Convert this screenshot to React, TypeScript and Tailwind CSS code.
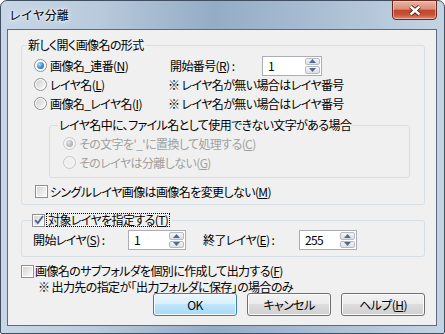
import React from 'react';

const font = "font-['Noto_Sans_CJK_JP',sans-serif] [font-feature-settings:'palt'] tracking-[-0.6px]";

function Radio({ checked, disabled }: { checked?: boolean; disabled?: boolean }) {
  return (
    <span
      className={
        disabled
          ? 'flex h-[13px] w-[13px] shrink-0 items-center justify-center rounded-full border border-[#c8c8c8] bg-[#f4f4f4]'
          : 'flex h-[13px] w-[13px] shrink-0 items-center justify-center rounded-full border border-[#8e8f8f] bg-white'
      }
    >
      {checked ? (
        <span
          className={
            disabled
              ? 'h-[7px] w-[7px] rounded-full bg-radial-[at_35%_35%] from-[#e4e4e4] to-[#9a9a9a]'
              : 'h-[7px] w-[7px] rounded-full bg-radial-[at_35%_35%] from-[#b4e2fc] via-[#3f8fdc] to-[#17478f]'
          }
        />
      ) : (
        <span
          className={
            disabled
              ? 'h-[9px] w-[9px] rounded-full bg-[#f0f0f0]'
              : 'h-[9px] w-[9px] rounded-full bg-gradient-to-br from-[#cfcfcf] to-[#fbfbfb]'
          }
        />
      )}
    </span>
  );
}

function Check({ checked }: { checked?: boolean }) {
  return (
    <span className="relative flex h-[13px] w-[13px] shrink-0 items-center justify-center border border-[#8e8f8f] bg-white">
      <span className="h-[9px] w-[9px] bg-gradient-to-br from-[#d6d6d6] to-[#fafafa]" />
      {checked && (
        <svg className="absolute left-[0px] top-[-1px]" width="12" height="12" viewBox="0 0 12 12">
          <path d="M2.2 6.2 L4.8 9 L10 2" fill="none" stroke="#4c5f96" strokeWidth="1.8" />
        </svg>
      )}
    </span>
  );
}

function Spin({ value, w }: { value: string; w: string }) {
  return (
    <div className={`flex h-[20px] ${w} border border-[#abadb3] bg-white`}>
      <span className="flex-1 pl-[5px] leading-[18px]">{value}</span>
      <div className="my-[1px] mr-[1px] flex w-[15px] flex-col gap-px">
        <span className="flex flex-1 items-center justify-center rounded-[2px] border border-[#b6bcc6] bg-gradient-to-b from-[#f5f5f5] to-[#dcdfe4]">
          <svg width="7" height="4" viewBox="0 0 7 4">
            <path d="M0 4 L3.5 0 L7 4 Z" fill="#4f6a8f" />
          </svg>
        </span>
        <span className="flex flex-1 items-center justify-center rounded-[2px] border border-[#b6bcc6] bg-gradient-to-b from-[#f5f5f5] to-[#dcdfe4]">
          <svg width="7" height="4" viewBox="0 0 7 4">
            <path d="M0 0 L7 0 L3.5 4 Z" fill="#4f6a8f" />
          </svg>
        </span>
      </div>
    </div>
  );
}

const note = '※ レイヤ名が無い場合はレイヤ番号';

export default function App() {
  return (
    <div
      className={`${font} flex h-[334px] w-[445px] flex-col rounded-t-[7px] rounded-b-[2px] border border-[#3f4f61] bg-[linear-gradient(90deg,#c8d7e7_0%,#b8cadc_22%,#94acc5_48%,#a6bbd1_68%,#c4d4e4_100%)] pb-[7px] pl-[6px] pr-[7px] text-[12px] leading-[14px] text-black`}
    >
      {/* title bar */}
      <div className="flex h-[28px] items-start">
        <span className="pl-[2px] pt-[6px] leading-[16px] tracking-normal [font-feature-settings:normal] [text-shadow:0_0_6px_#ffffff,0_0_3px_#ffffff]">
          レイヤ分離
        </span>
        <div className="-mt-px ml-auto flex h-[20px] w-[45px] items-center justify-center rounded-b-[4px] border border-[#6b2a1d] bg-[linear-gradient(#ebb4a6_0%,#dc8d77_45%,#c4452c_52%,#c6553a_78%,#df8f78_100%)] shadow-[inset_0_0_0_1px_rgba(255,220,210,0.5)]">
          <svg width="14" height="11" viewBox="0 0 14 11">
            <path d="M2.5 1.5 L11.5 9.5 M11.5 1.5 L2.5 9.5" stroke="#4a1a12" strokeWidth="4.2" />
            <path d="M2.5 1.5 L11.5 9.5 M11.5 1.5 L2.5 9.5" stroke="#ffffff" strokeWidth="2.4" />
          </svg>
        </div>
      </div>

      {/* client */}
      <div className="flex flex-1 flex-col border border-[#5d6b7a] bg-[#f0f0f0] pl-[13px] pr-[11px]">
        {/* group 1 */}
        <div className="relative mt-[15px] rounded-[3px] border border-[#d5dfe5] pb-[3px] pl-[12px] pr-[14px] pt-[10px]">
          <span className="absolute left-[5px] top-[-8px] bg-[#f0f0f0] px-[1px]">新しく開く画像名の形式</span>

          <div className="flex h-[19px] items-center">
            <div className="flex w-[134px] items-center gap-[3px]">
              <Radio checked />
              <span>
                画像名_連番(<u className="underline-offset-1">N</u>)
              </span>
            </div>
            <span className="w-[94px] pl-[2px]">
              開始番号(<u className="underline-offset-1">R</u>) :
            </span>
            <Spin value="1" w="w-[60px]" />
          </div>
          <div className="flex h-[19px] items-center">
            <div className="flex w-[134px] items-center gap-[3px]">
              <Radio />
              <span>
                レイヤ名(<u className="underline-offset-1">L</u>)
              </span>
            </div>
            <span>{note}</span>
          </div>
          <div className="flex h-[19px] items-center">
            <div className="flex w-[134px] items-center gap-[3px]">
              <Radio />
              <span>
                画像名_レイヤ名(<u className="underline-offset-1">I</u>)
              </span>
            </div>
            <span>{note}</span>
          </div>

          {/* inner group */}
          <div className="relative ml-[15px] mt-[12px] rounded-[3px] border border-[#d5dfe5] pb-[5px] pl-[13px] pt-[8px]">
            <span className="absolute left-[8px] top-[-8px] bg-[#f0f0f0] px-[1px]">
              レイヤ名中に、ファイル名として使用できない文字がある場合
            </span>
            <div className="flex h-[19px] items-center gap-[3px] text-[#a0a0a0]">
              <Radio checked disabled />
              <span>
                その文字を'_'に置換して処理する(<u className="underline-offset-1">C</u>)
              </span>
            </div>
            <div className="flex h-[19px] items-center gap-[3px] text-[#a0a0a0]">
              <Radio disabled />
              <span>
                そのレイヤは分離しない(<u className="underline-offset-1">G</u>)
              </span>
            </div>
          </div>

          <div className="mt-[4px] flex h-[19px] items-center gap-[2px] pl-[1px]">
            <Check />
            <span>
              シングルレイヤ画像は画像名を変更しない(<u className="underline-offset-1">M</u>)
            </span>
          </div>
        </div>

        {/* group 2 */}
        <div className="relative mt-[15px] rounded-[3px] border border-[#d5dfe5] pb-[6px] pl-[11px] pt-[9px]">
          <div className="absolute left-[10px] top-[-8px] flex items-center gap-[1px] bg-[#f0f0f0] pr-[2px]">
            <Check checked />
            <span className="border border-dotted border-black px-[1px] leading-[12px]">
              対象レイヤを指定する(<u className="underline-offset-1">T</u>)
            </span>
          </div>
          <div className="flex h-[20px] items-center">
            <span className="w-[95px]">
              開始レイヤ(<u className="underline-offset-1">S</u>) :
            </span>
            <Spin value="1" w="w-[58px]" />
            <span className="ml-[17px] w-[96px]">
              終了レイヤ(<u className="underline-offset-1">E</u>) :
            </span>
            <Spin value="255" w="w-[58px]" />
          </div>
        </div>

        <div className="mt-[7px] flex h-[14px] items-center gap-[1px]">
          <Check />
          <span>
            画像名のサブフォルダを個別に作成して出力する(<u className="underline-offset-1">F</u>)
          </span>
        </div>
        <div className="mt-[2px] h-[14px] pl-[17px]">※ 出力先の指定が「出力フォルダに保存」の場合のみ</div>

        {/* buttons */}
        <div className="-mt-px flex justify-end gap-[10px]">
          <button className="h-[23px] w-[84px] rounded-[3px] border border-[#3c7fb1] bg-[linear-gradient(#eaf6fd_0%,#d9f0fc_50%,#bee6fd_50%,#a7d9f5_100%)] leading-[21px] shadow-[inset_0_0_0_1px_#f4fbff]">
            OK
          </button>
          <button className="h-[23px] w-[84px] rounded-[3px] border border-[#707070] bg-[linear-gradient(#f2f2f2_0%,#ebebeb_50%,#dddddd_50%,#cfcfcf_100%)] leading-[21px] shadow-[inset_0_0_0_1px_#fcfcfc]">
            キャンセル
          </button>
          <button className="h-[23px] w-[84px] rounded-[3px] border border-[#707070] bg-[linear-gradient(#f2f2f2_0%,#ebebeb_50%,#dddddd_50%,#cfcfcf_100%)] leading-[21px] shadow-[inset_0_0_0_1px_#fcfcfc]">
            ヘルプ(<u className="underline-offset-1">H</u>)
          </button>
        </div>
      </div>
    </div>
  );
}
